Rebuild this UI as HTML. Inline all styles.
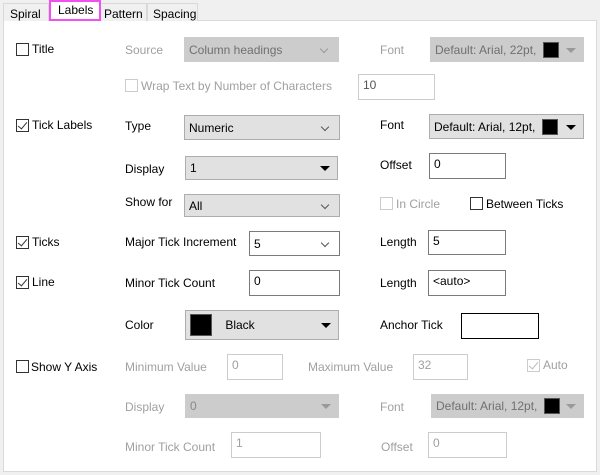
<!DOCTYPE html>
<html><head><style>
*{box-sizing:border-box;margin:0;padding:0}
body{width:600px;height:475px;background:#f0f0f0;font-family:"Liberation Sans",sans-serif;font-size:12px;color:#000;position:relative;overflow:hidden}
.a{position:absolute}
.panel{left:3px;top:20px;width:594px;height:452px;background:#fff;border:1px solid #d9d9d9}
.tab{top:3px;height:18px;border:1px solid #d9d9d9;border-bottom:none;background:#f0f0f0;padding:3px 0 0 6px;font-size:12px}
.t{position:absolute;white-space:nowrap;line-height:14px}
.g{color:#a0a0a0}
.cb{position:absolute;width:13px;height:13px;border:1px solid #333;background:#fff}
.cb.d{border-color:#ccc}
.ck::after{content:"";position:absolute;left:3px;top:0px;width:4px;height:8px;border:solid #333;border-width:0 1.5px 1.5px 0;transform:rotate(40deg)}
.cb.d.ck::after{border-color:#bbb}
.box{position:absolute;border:1px solid #7a7a7a;background:#fff;padding:3px 0 0 4px}
.box.d{border-color:#ccc;color:#a0a0a0}
.cmb{position:absolute;border:1px solid #adadad;background:#e1e1e1;padding:0 0 0 4px;display:flex;align-items:center}
.cmb.d{background:#ccc;border-color:#ccc;color:#707070}
.chev::after{content:"";position:absolute;right:11px;top:50%;margin-top:-4px;width:5px;height:5px;border:solid #555;border-width:0 1px 1px 0;transform:rotate(45deg)}
.d.chev::after{border-color:#999}
.tri::after{content:"";position:absolute;right:7px;top:50%;margin-top:-2px;border-left:5px solid transparent;border-right:5px solid transparent;border-top:5px solid #000}
.d.tri::after{border-top-color:#999}
.sw{display:inline-block;width:16px;height:16px;background:#000;border:1px solid #555}
</style></head><body>
<div class="a panel"></div>
<div class="a tab" style="left:3px;width:46px">Spiral</div>
<div class="a tab" style="left:100px;width:47px;padding-left:3px">Pattern</div>
<div class="a tab" style="left:147px;width:51px;padding-left:5px">Spacing</div>
<div class="a" style="left:49px;top:0;width:52px;height:21px;background:#fff;border:2px solid #f14ff1;padding:1px 0 0 7px">Labels</div>

<div class="cb" style="left:16px;top:43px"></div><div class="t" style="left:32px;top:42px">Title</div>
<div class="t g" style="left:125px;top:43px">Source</div>
<div class="cmb d chev" style="left:184px;top:37px;width:155px;height:25px">Column headings</div>
<div class="t g" style="left:380px;top:43px">Font</div>
<div class="cmb d tri" style="left:430px;top:37px;width:154px;height:25px">Default: Arial, 22pt,&nbsp;&nbsp;<span class="sw"></span></div>
<div class="cb d" style="left:125px;top:79px"></div><div class="t g" style="left:141px;top:79px">Wrap Text by Number of Characters</div>
<div class="box d" style="left:358px;top:74px;width:77px;height:26px;color:#555">10</div>

<div class="cb ck" style="left:16px;top:119px"></div><div class="t" style="left:32px;top:118px">Tick Labels</div>
<div class="t" style="left:125px;top:119px">Type</div>
<div class="cmb chev" style="left:184px;top:115px;width:156px;height:25px">Numeric</div>
<div class="t" style="left:380px;top:118px">Font</div>
<div class="cmb tri" style="left:429px;top:114px;width:155px;height:25px">Default: Arial, 12pt,&nbsp;&nbsp;<span class="sw"></span></div>
<div class="t" style="left:125px;top:162px">Display</div>
<div class="cmb tri" style="left:185px;top:156px;width:153px;height:24px">1</div>
<div class="t" style="left:380px;top:158px">Offset</div>
<div class="box" style="left:429px;top:153px;width:77px;height:26px">0</div>
<div class="t" style="left:125px;top:195px">Show for</div>
<div class="cmb chev" style="left:184px;top:194px;width:156px;height:23px">All</div>
<div class="cb d" style="left:380px;top:197px"></div><div class="t g" style="left:396px;top:197px">In Circle</div>
<div class="cb" style="left:470px;top:197px"></div><div class="t" style="left:486px;top:197px">Between Ticks</div>

<div class="cb ck" style="left:16px;top:236px"></div><div class="t" style="left:32px;top:235px">Ticks</div>
<div class="t" style="left:125px;top:235px">Major Tick Increment</div>
<div class="box chev" style="left:249px;top:231px;width:91px;height:25px;padding-top:5px">5</div>
<div class="t" style="left:380px;top:235px">Length</div>
<div class="box" style="left:428px;top:230px;width:78px;height:25px">5</div>

<div class="cb ck" style="left:16px;top:276px"></div><div class="t" style="left:32px;top:275px">Line</div>
<div class="t" style="left:125px;top:276px">Minor Tick Count</div>
<div class="box" style="left:249px;top:270px;width:91px;height:26px">0</div>
<div class="t" style="left:380px;top:276px">Length</div>
<div class="box" style="left:428px;top:270px;width:78px;height:26px">&lt;auto&gt;</div>

<div class="t" style="left:125px;top:318px">Color</div>
<div class="cmb tri" style="left:185px;top:310px;width:154px;height:30px;padding-left:4px"><span class="sw" style="width:22px;height:22px"></span>&nbsp;&nbsp;&nbsp;&nbsp;Black</div>
<div class="t" style="left:380px;top:318px">Anchor Tick</div>
<div class="box" style="left:461px;top:313px;width:78px;height:26px;border-color:#000"></div>

<div class="cb" style="left:16px;top:360px"></div><div class="t" style="left:31px;top:360px">Show Y Axis</div>
<div class="t g" style="left:125px;top:360px">Minimum Value</div>
<div class="box d" style="left:227px;top:354px;width:56px;height:26px">0</div>
<div class="t g" style="left:308px;top:360px">Maximum Value</div>
<div class="box d" style="left:413px;top:354px;width:55px;height:26px">32</div>
<div class="cb d ck" style="left:527px;top:359px"></div><div class="t g" style="left:543px;top:358px">Auto</div>
<div class="t g" style="left:125px;top:400px">Display</div>
<div class="cmb d tri" style="left:185px;top:394px;width:154px;height:24px;color:#888">0</div>
<div class="t g" style="left:380px;top:400px">Font</div>
<div class="cmb d tri" style="left:431px;top:394px;width:153px;height:24px">Default: Arial, 12pt,&nbsp;&nbsp;<span class="sw"></span></div>
<div class="t g" style="left:125px;top:440px">Minor Tick Count</div>
<div class="box d" style="left:231px;top:432px;width:90px;height:26px">1</div>
<div class="t g" style="left:381px;top:440px">Offset</div>
<div class="box d" style="left:428px;top:432px;width:79px;height:26px">0</div>
</body></html>
